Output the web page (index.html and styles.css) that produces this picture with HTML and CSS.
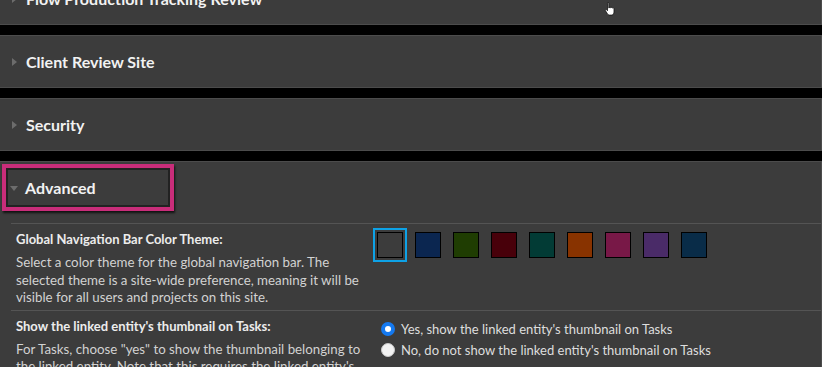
FILE: index.html
```html
<!DOCTYPE html>
<html lang="en">
<head>
  <meta charset="UTF-8" />
  <meta name="viewport" content="width=device-width, initial-scale=1.0"/>
  <title>Site Preferences</title>
  <link rel="stylesheet" href="styles.css">
</head>
<body>
  <div class="sections">
    <section class="panel">
      <div class="panel-head"><span class="caret"></span><h3>Flow Production Tracking Review</h3></div>
    </section>

    <section class="panel">
      <div class="panel-head"><span class="caret"></span><h3>Client Review Site</h3></div>
    </section>

    <section class="panel">
      <div class="panel-head"><span class="caret"></span><h3>Security</h3></div>
    </section>

    <section class="panel open">
      <div class="panel-head">
        <span class="caret down"></span><h3>Advanced</h3>
        <div class="highlight"></div>
      </div>

      <div class="settings">
        <div class="setting">
          <div class="setting-info">
            <div class="setting-label">Global Navigation Bar Color Theme:</div>
            <p>Select a color theme for the global navigation bar. The selected theme is a site-wide preference, meaning it will be visible for all users and projects on this site.</p>
          </div>
          <div class="setting-control swatches">
            <span class="swatch active"><i class="c-gray"></i></span>
            <span class="swatch"><i class="c-navy"></i></span>
            <span class="swatch"><i class="c-green"></i></span>
            <span class="swatch"><i class="c-red"></i></span>
            <span class="swatch"><i class="c-teal"></i></span>
            <span class="swatch"><i class="c-orange"></i></span>
            <span class="swatch"><i class="c-pink"></i></span>
            <span class="swatch"><i class="c-purple"></i></span>
            <span class="swatch"><i class="c-blue"></i></span>
          </div>
        </div>

        <div class="setting">
          <div class="setting-info">
            <div class="setting-label">Show the linked entity's thumbnail on Tasks:</div>
            <p>For Tasks, choose "yes" to show the thumbnail belonging to the linked entity. Note that this requires the linked entity's thumbnail to be set.</p>
          </div>
          <div class="setting-control radios">
            <label class="radio"><span class="dot checked"></span>Yes, show the linked entity's thumbnail on Tasks</label>
            <label class="radio"><span class="dot"></span>No, do not show the linked entity's thumbnail on Tasks</label>
          </div>
        </div>
      </div>
    </section>
  </div>

  <svg class="cursor" width="12" height="14" viewBox="0 0 12 14">
    <path d="M3.5 1.2c0-.7 1.3-.7 1.3 0V6l.4-.1c.4-1 1.5-.8 1.6 0 .5-.8 1.5-.6 1.6.2.6-.5 1.6-.2 1.6.6v3.4c0 1.6-1 3-2.6 3H5.6c-1 0-1.6-.5-2.1-1.2L1.4 8.6c-.5-.8.4-1.5 1.1-.9l1 1z" fill="#fff" stroke="#111" stroke-width=".8"/>
  </svg>
</body>
</html>
```

FILE: styles.css
```css
body {
  margin: 0;
  background: #000;
  font-family: Lato, 'Open Sans', sans-serif;
  height: 367px;
  overflow: hidden;
  position: relative;
}

.sections {
  display: flex;
  flex-direction: column;
  gap: 10px;
  margin-top: -28px;
}

.panel {
  background: #3c3c3c;
  border-top: 1px solid #4c4c4c;
  border-bottom: 1px solid #4c4c4c;
  border-right: 1px solid #4c4c4c;
}

.panel-head {
  height: 51px;
  display: flex;
  align-items: center;
  position: relative;
}

.panel-head h3 {
  margin: 0;
  font-size: 16px;
  font-weight: bold;
  color: #f2f2f2;
}

.caret {
  width: 0;
  height: 0;
  margin: 0 9px 0 12px;
  border-top: 4px solid transparent;
  border-bottom: 4px solid transparent;
  border-left: 5px solid #6c6c6c;
}

.caret.down {
  margin: 1px 7px 0 10px;
  border-left: 4px solid transparent;
  border-right: 4px solid transparent;
  border-top: 5px solid #6c6c6c;
  border-bottom: none;
}

.highlight {
  position: absolute;
  left: 2px;
  top: 2px;
  width: 164px;
  height: 39px;
  border: 4px solid #c92d7a;
  box-shadow: inset 0 0 0 2px #222, 1px 2px 2px rgba(0,0,0,0.7);
}

.settings {
  margin: 10px 0 0 11px;
}

.setting {
  display: flex;
  border-top: 1px solid #545454;
  padding: 7px 0 3px 5px;
}

.setting-info {
  width: 357px;
  flex-shrink: 0;
}

.setting-label {
  font-size: 13px;
  font-weight: bold;
  line-height: 16px;
  color: #ececec;
}

.setting-info p {
  margin: 7px 0 0;
  width: 345px;
  font-size: 13.3px;
  line-height: 17.5px;
  color: #d2d2d2;
}

.swatches {
  display: flex;
  gap: 4px;
  margin-top: -3px;
}

.swatch {
  width: 34px;
  height: 34px;
  box-sizing: border-box;
  border: 2px solid transparent;
  padding: 2px;
}

.swatch.active {
  border-color: #0ea2e6;
}

.swatch i {
  display: block;
  width: 26px;
  height: 26px;
  box-sizing: border-box;
  border: 1px solid;
}

.c-gray { background: #3c3c3c; border-color: #5a5a5a; }
.c-navy { background: #0b2650; border-color: #1d4680; }
.c-green { background: #1f3d02; border-color: #4c6c1c; }
.c-red { background: #48000a; border-color: #852231; }
.c-teal { background: #023b35; border-color: #1b665d; }
.c-orange { background: #883300; border-color: #c26511; }
.c-pink { background: #781847; border-color: #b23373; }
.c-purple { background: #4a2b68; border-color: #7b529b; }
.c-blue { background: #092c48; border-color: #1a5684; }

.radios {
  padding: 1px 0 0 8px;
}

.radio {
  display: flex;
  align-items: center;
  height: 21px;
  font-size: 13px;
  color: #dedede;
}

.dot {
  width: 14px;
  height: 14px;
  box-sizing: border-box;
  border-radius: 50%;
  background: #f2f2f2;
  border: 1px solid #c8c8c8;
  margin-right: 6px;
}

.dot.checked {
  background: #fff;
  border: 4px solid #1479f0;
}

.cursor {
  position: absolute;
  left: 604px;
  top: 2px;
}
```
